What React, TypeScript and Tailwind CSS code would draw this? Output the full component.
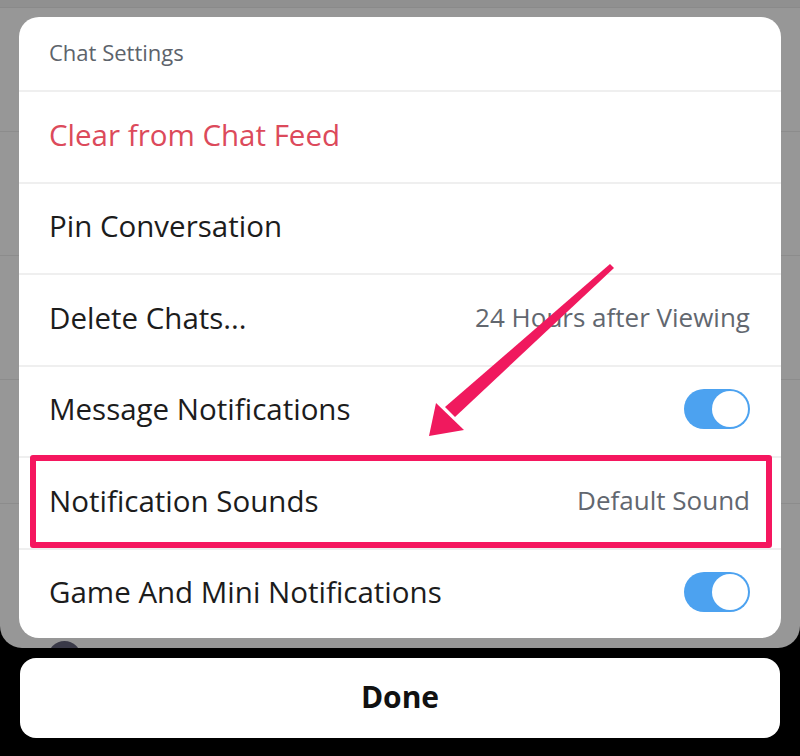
import React from "react";

const font = { fontFamily: '"Open Sans", "Noto Sans", sans-serif' };

function Toggle() {
  return (
    <div className="w-[66px] h-[40px] rounded-full bg-[#4ca2f0] relative">
      <div className="absolute right-[2px] top-[2px] w-[36px] h-[36px] rounded-full bg-white" />
    </div>
  );
}

function Row({
  label,
  labelClass = "text-[#1c1c1c]",
  right,
}: {
  label: string;
  labelClass?: string;
  right?: React.ReactNode;
}) {
  return (
    <div className="h-[91.5px] flex items-center justify-between pl-[30px] pr-[31px] pb-[4px] border-t-2 border-[#efefef]">
      <span className={`text-[29.5px] ${labelClass}`}>{label}</span>
      {right}
    </div>
  );
}

export default function App() {
  return (
    <div className="w-[800px] h-[756px] bg-black relative overflow-hidden" style={font}>
      {/* dimmed chat list behind the sheet */}
      <div className="h-[648px] bg-[#979797] rounded-b-[22px] relative overflow-hidden">
        <div className="h-[8px] bg-[#909090] border-b border-[#8a8a8a]" />
        <div className="h-[124px] border-b border-[#8c8c8c]" />
        <div className="h-[124px] border-b border-[#8c8c8c]" />
        <div className="h-[124px] border-b border-[#8c8c8c]" />
        <div className="h-[124px] border-b border-[#8c8c8c]" />
        <div className="absolute left-[48px] top-[641px] w-[33px] h-[33px] rounded-full bg-[#3a3a48]" />

        {/* settings sheet */}
        <div className="absolute left-[19px] top-[17px] w-[762px] h-[621px] bg-white rounded-[20px] overflow-hidden">
          <div className="h-[73px] flex items-center pl-[30px] pb-[2px]">
            <span className="text-[22px] text-[#5d636b]">Chat Settings</span>
          </div>
          <Row label="Clear from Chat Feed" labelClass="text-[#dc4a5b]" />
          <Row label="Pin Conversation" />
          <Row
            label="Delete Chats..."
            right={<span className="text-[26px] font-medium text-[#62676f]">24 Hours after Viewing</span>}
          />
          <Row label="Message Notifications" right={<Toggle />} />
          <Row
            label="Notification Sounds"
            right={<span className="text-[26px] font-medium text-[#62676f]">Default Sound</span>}
          />
          <Row label="Game And Mini Notifications" right={<Toggle />} />
        </div>

        {/* highlight frame */}
        <div className="absolute left-[30px] top-[455px] w-[742px] h-[93px] border-[6px] border-[#f5175f] rounded-[3px]" />

        {/* pointer arrow */}
        <svg className="absolute left-0 top-0" width="800" height="648" viewBox="0 0 800 648">
          <path d="M610 264 L614 268 L455 417 L445 407 Z" fill="#f0195e" />
          <path d="M429 436 L436 403 L464 430 Z" fill="#f0195e" />
        </svg>
      </div>

      {/* done button */}
      <div className="mx-[20px] mt-[10px] h-[80px] bg-white rounded-[16px] flex items-center justify-center pb-[3px]">
        <span className="text-[30px] font-bold text-[#111]">Done</span>
      </div>
    </div>
  );
}
